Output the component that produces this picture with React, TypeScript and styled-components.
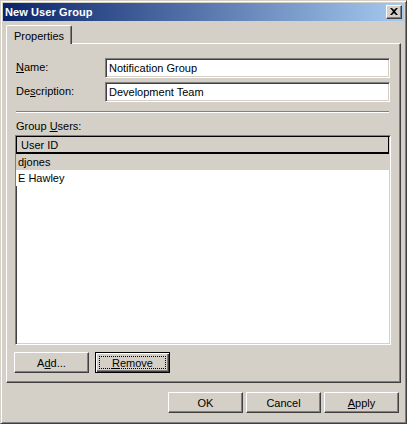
import styled, { createGlobalStyle } from 'styled-components'

const face = '#d4d0c8'
const shadow = '#808080'
const dark = '#404040'

const GlobalStyle = createGlobalStyle`
  html, body {
    margin: 0;
    padding: 0;
    background: ${face};
  }
  body {
    font-family: "Liberation Sans", Arial, sans-serif;
    font-size: 11px;
    color: #000;
  }
`

const Window = styled.div`
  width: 407px;
  height: 424px;
  box-sizing: border-box;
  background: ${face};
  border: 1px solid;
  border-color: ${face} ${dark} ${dark} ${face};
  box-shadow: inset 1px 1px #fff, inset -1px -1px ${shadow};
  padding: 2px;
  display: flex;
  flex-direction: column;
`

const TitleBar = styled.div`
  height: 18px;
  display: flex;
  align-items: center;
  justify-content: space-between;
  padding: 0 2px 0 2px;
  background: linear-gradient(to right, #0a246a, #a6caf0);
`

const Title = styled.span`
  color: #fff;
  font-weight: bold;
  font-size: 11px;
  letter-spacing: 0.1px;
`

const CloseButton = styled.div`
  width: 16px;
  height: 14px;
  box-sizing: border-box;
  background: ${face};
  border: 1px solid;
  border-color: #fff ${dark} ${dark} #fff;
  box-shadow: inset -1px -1px ${shadow};
  display: flex;
  align-items: center;
  justify-content: center;
  padding-bottom: 1px;
`

const Body = styled.div`
  flex: 1;
  display: flex;
  flex-direction: column;
  padding: 4px 3px 0 3px;
`

const TabStrip = styled.div`
  display: flex;
  position: relative;
  z-index: 1;
  margin-bottom: -1px;
`

const Tab = styled.div`
  height: 19px;
  width: 66px;
  box-sizing: border-box;
  display: flex;
  align-items: center;
  justify-content: center;
  background: ${face};
  border-top: 1px solid #fff;
  border-left: 1px solid #fff;
  border-right: 1px solid ${dark};
  box-shadow: inset -1px 0 ${shadow};
  border-radius: 2px 2px 0 0;
  padding-top: 2px;
`

const Panel = styled.div`
  height: 340px;
  box-sizing: border-box;
  border: 1px solid;
  border-color: #fff ${dark} ${dark} #fff;
  box-shadow: inset -1px -1px ${shadow};
  padding: 14px 8px 0 8px;
  display: flex;
  flex-direction: column;
`

const FieldRow = styled.div`
  display: flex;
  align-items: center;
  margin-bottom: 4px;
`

const Label = styled.label`
  width: 89px;
  padding-left: 1px;
  flex-shrink: 0;
  margin-top: -2px;
`

const TextBox = styled.div`
  width: 285px;
  height: 20px;
  box-sizing: border-box;
  background: #fff;
  border: 1px solid;
  border-color: ${shadow} #fff #fff ${shadow};
  box-shadow: inset 1px 1px ${dark}, inset -1px -1px ${face};
  padding: 0 3px;
  display: flex;
  align-items: center;
`

const Separator = styled.div`
  height: 0;
  margin: 5px 1px 0 1px;
  width: 373px;
  border-top: 1px solid ${shadow};
  border-bottom: 1px solid #fff;
`

const SectionLabel = styled.div`
  margin: 7px 0 0 1px;
  height: 14px;
`

const ListBox = styled.div`
  height: 210px;
  width: 376px;
  box-sizing: border-box;
  background: #fff;
  border: 1px solid;
  border-color: ${shadow} #fff #fff ${shadow};
  box-shadow: inset 1px 1px ${dark}, inset -1px -1px ${face};
  margin-top: 1px;
  padding: 0 1px 1px 0;
  display: flex;
  flex-direction: column;
`

const ListHeader = styled.div`
  height: 18px;
  box-sizing: border-box;
  background: ${face};
  border: 1px solid #000;
  border-width: 1px 1px 2px 1px;
  display: flex;
  align-items: center;
  padding-left: 4px;
`

const ListRow = styled.div<{ $selected?: boolean }>`
  height: 16px;
  display: flex;
  align-items: center;
  padding-left: 2px;
  background: ${p => (p.$selected ? face : '#fff')};
`

const ButtonRow = styled.div<{ $end?: boolean }>`
  display: flex;
  gap: ${p => (p.$end ? '3px' : '6px')};
  justify-content: ${p => (p.$end ? 'flex-end' : 'flex-start')};
  margin-top: ${p => (p.$end ? '9px' : '7px')};
  margin-left: ${p => (p.$end ? '0' : '-1px')};
  padding-right: ${p => (p.$end ? '2px' : '0')};
`

const Button = styled.div<{ $default?: boolean }>`
  width: 75px;
  height: 21px;
  box-sizing: border-box;
  background: ${face};
  display: flex;
  align-items: center;
  justify-content: center;
  position: relative;
  border: 1px solid;
  border-color: ${p => (p.$default ? '#000' : `#fff ${dark} ${dark} #fff`)};
  box-shadow: ${p =>
    p.$default
      ? `inset 1px 1px #fff, inset -1px -1px ${dark}, inset -2px -2px ${shadow}`
      : `inset -1px -1px ${shadow}`};
`

const FocusRing = styled.span`
  position: absolute;
  inset: 3px;
  border: 1px dotted #000;
`

const ButtonText = styled.span`
  position: relative;
`

export default function App() {
  return (
    <>
      <GlobalStyle />
      <Window>
        <TitleBar>
          <Title>New User Group</Title>
          <CloseButton>
            <svg width="8" height="7" viewBox="0 0 8 7">
              <path d="M0 0h2l2 2 2-2h2L5 3.5 8 7H6L4 5 2 7H0l3-3.5z" fill="#000" />
            </svg>
          </CloseButton>
        </TitleBar>
        <Body>
          <TabStrip>
            <Tab>Properties</Tab>
          </TabStrip>
          <Panel>
            <FieldRow>
              <Label><u>N</u>ame:</Label>
              <TextBox>Notification Group</TextBox>
            </FieldRow>
            <FieldRow>
              <Label>De<u>s</u>cription:</Label>
              <TextBox>Development Team</TextBox>
            </FieldRow>
            <Separator />
            <SectionLabel>Group <u>U</u>sers:</SectionLabel>
            <ListBox>
              <ListHeader>User ID</ListHeader>
              <ListRow $selected>djones</ListRow>
              <ListRow>E Hawley</ListRow>
            </ListBox>
            <ButtonRow>
              <Button>
                <ButtonText>A<u>d</u>d...</ButtonText>
              </Button>
              <Button $default>
                <FocusRing />
                <ButtonText><u>R</u>emove</ButtonText>
              </Button>
            </ButtonRow>
          </Panel>
          <ButtonRow $end>
            <Button>OK</Button>
            <Button>Cancel</Button>
            <Button><u>A</u>pply</Button>
          </ButtonRow>
        </Body>
      </Window>
    </>
  )
}
